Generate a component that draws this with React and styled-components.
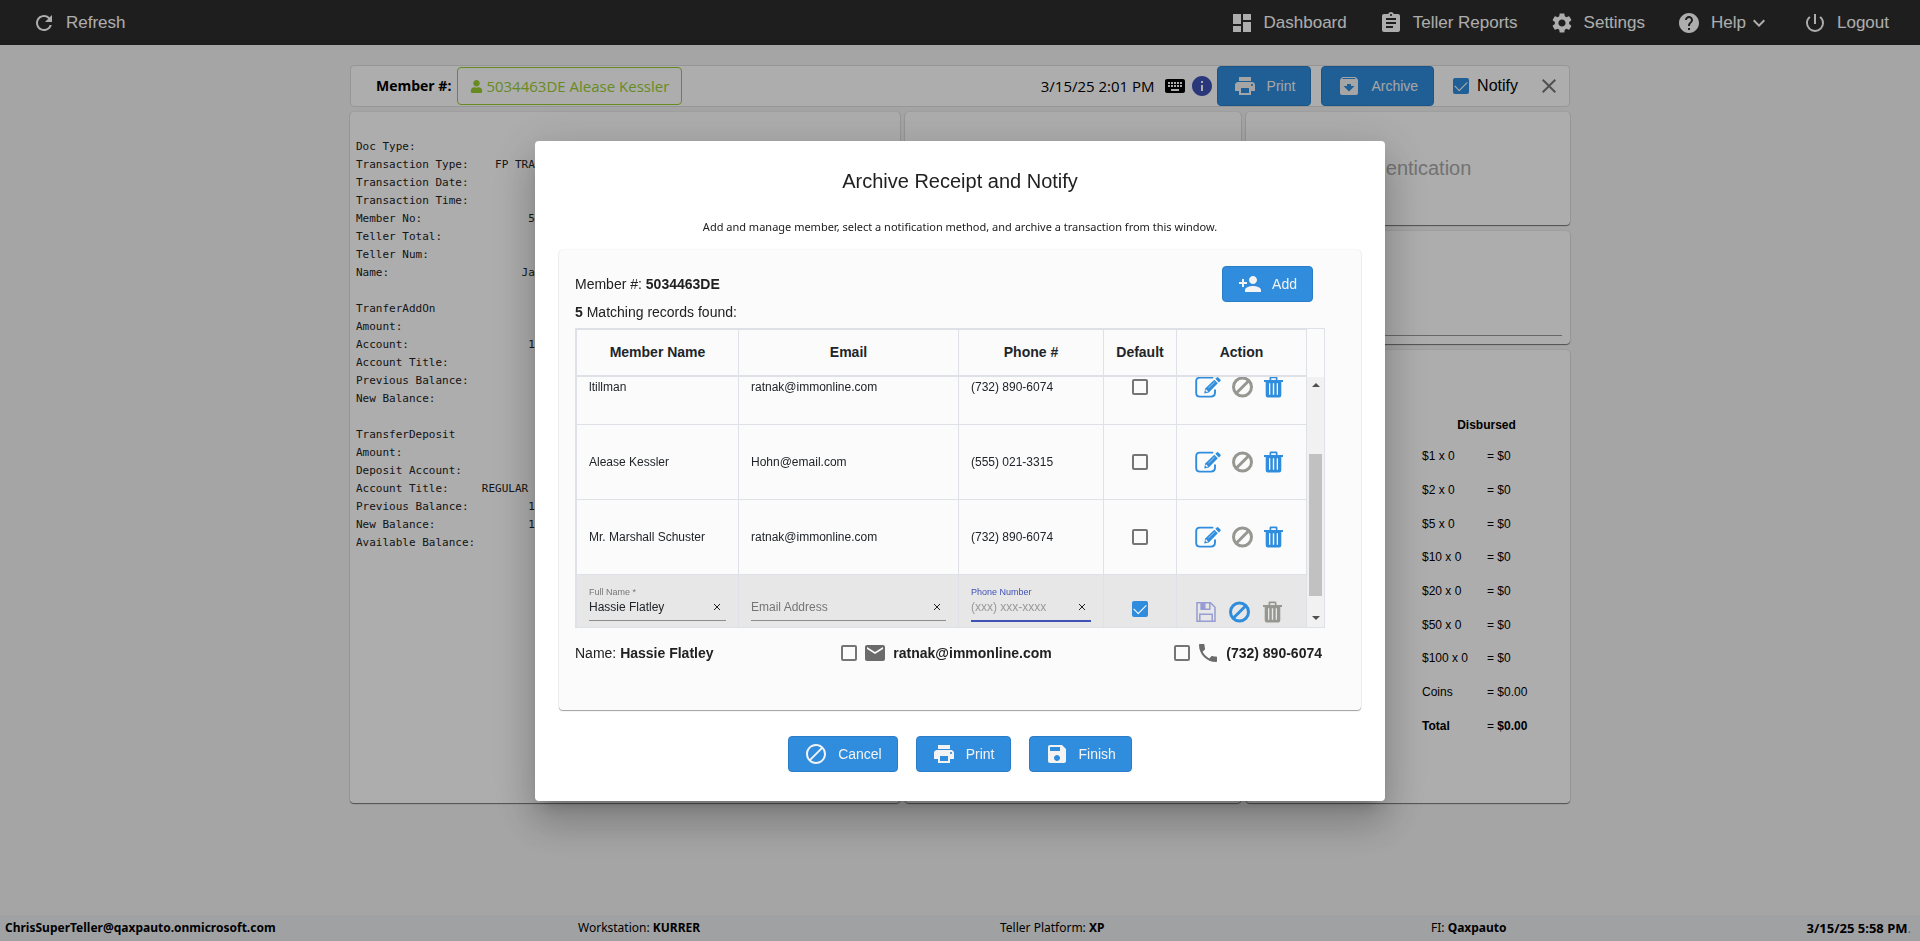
import React, { useLayoutEffect, useRef } from "react";
import styled, { createGlobalStyle, css } from "styled-components";
import {
  MdRefresh, MdDashboard, MdAssignment, MdSettings, MdHelp, MdExpandMore,
  MdPowerSettingsNew, MdKeyboard, MdInfo, MdPrint, MdArchive, MdClose,
  MdPersonAdd, MdBlock, MdSave, MdEmail, MdPhone,
} from "react-icons/md";
import { FaUser } from "react-icons/fa";

const sans = `"Liberation Sans", Arial, sans-serif`;
const humanist = `"Open Sans", "Noto Sans", sans-serif`;
const humanistWide = `"Noto Sans", "Open Sans", sans-serif`;
const mono = `"DejaVu Sans Mono", monospace`;
const blue = "#308ddd";
const line = "#dee2e6";

const GlobalStyle = createGlobalStyle`
  * { box-sizing: border-box; }
  body { margin: 0; background: #f4f4f4; font-family: ${sans}; font-size: 14px; color: #000; }
  button, input { font-family: inherit; margin: 0; }
  svg { display: block; flex: none; }
`;

const Page = styled.div`
  min-height: 100vh;
  display: flex;
  flex-direction: column;
`;

const TopBar = styled.nav`
  display: flex;
  justify-content: space-between;
  align-items: center;
  height: 45px;
  padding: 0 31px 0 32px;
  background: #2d2d2d;
`;

const NavGroup = styled.div`
  display: flex;
  gap: 32px;
`;

const NavLink = styled.a`
  display: flex;
  align-items: center;
  gap: 10px;
  color: #fff;
  font-size: 17px;
  line-height: 24px;
  text-decoration: none;
`;

const NavLabel = styled.span`
  display: flex;
  align-items: center;
  gap: 1px;
`;

const Main = styled.main`
  flex: 1;
  width: 100%;
  max-width: 1220px;
  margin: 0 auto;
  padding-top: 20px;
`;

const MemberBar = styled.header`
  display: flex;
  align-items: center;
  justify-content: space-between;
  min-height: 42px;
  padding: 0 8px 0 25px;
  border: 1px solid #dedede;
  border-radius: 4px;
  background: #fff;
`;

const BarGroup = styled.div`
  display: flex;
  align-items: center;
  gap: ${(p) => p.$gap}px;
`;

const MemberCaption = styled.strong`
  font: 700 14px/36px ${humanist};
`;

const MemberBadge = styled.span`
  display: flex;
  align-items: center;
  gap: 3px;
  height: 38px;
  padding: 0 12px;
  border: 1px solid #9acd32;
  border-radius: 4px;
  color: #9acd32;
  font: 400 15px/36px ${humanist};
`;

const Stamp = styled.time`
  font: 400 15px/24px ${humanist};
  margin-right: 5px;
`;

const Button = styled.button`
  display: flex;
  align-items: center;
  gap: 10px;
  height: ${(p) => p.$height || 36}px;
  padding: 0 15px;
  border: 1px solid #2a7dc6;
  border-radius: 4px;
  background: ${blue};
  color: #f3f3f3;
  font-size: 14px;
`;

const IconButton = styled.button`
  display: flex;
  padding: 0;
  border: 0;
  background: none;
  color: ${(p) => p.$color || "#222"};
`;

const CheckLabel = styled.label`
  display: flex;
  align-items: center;
  gap: 8px;
  font-size: 16px;
`;

const CheckBox = styled.input.attrs({ type: "checkbox" })`
  appearance: none;
  display: inline-grid;
  flex: none;
  place-content: center;
  width: 16px;
  height: 16px;
  border: 2px solid #757575;
  border-radius: 2px;
  vertical-align: middle;
  &:checked { background: ${blue}; border-color: ${blue}; }
  &:checked::after {
    content: "";
    width: 11px;
    height: 6px;
    margin-bottom: 3px;
    border: solid #fff;
    border-width: 0 0 1px 1px;
    transform: rotate(-45deg);
  }
`;

const Panels = styled.div`
  display: grid;
  grid-template-columns: 550fr 336fr 324fr;
  gap: 5px;
  margin-top: 5px;
`;

const raised = css`
  border-radius: 4px;
  box-shadow: 0 1px 1px rgba(0, 0, 0, 0.5), 0 0 2px rgba(0, 0, 0, 0.16);
`;

const Card = styled.section`
  ${raised}
  background: #fff;
`;

const Stack = styled.div`
  display: grid;
  grid-template-rows: 113px 113px 453px;
  gap: 6px;
`;

const Receipt = styled.pre`
  margin: 0;
  padding: 26px 6px;
  color: #222;
  font: 400 11px/18px ${mono};
`;

const AuthCard = styled(Card)`
  display: flex;
  align-items: center;
  justify-content: center;
  color: #aaa;
  font-size: 20px;
`;

const SignCard = styled(Card)`
  display: flex;
  align-items: flex-end;
  padding: 8px;
`;

const SignLine = styled.hr`
  flex: 1;
  margin: 0;
  border: 0;
  border-top: 1px solid #999;
`;

const CashCard = styled(Card)`
  display: flex;
  justify-content: flex-end;
  align-items: flex-start;
  padding: 68px 19px 0 0;
`;

const CashTable = styled.table`
  width: 129px;
  border-collapse: collapse;
  font-size: 12px;
  th, td { padding: 0; text-align: left; font-weight: 400; }
  th:first-child { width: 65px; }
  b { font-weight: 400; }
  thead th { height: 21px; text-align: center; vertical-align: top; font-weight: 700; }
  tbody tr { height: 34px; }
  tbody tr:nth-child(3n) { height: 33px; }
  tbody tr:last-child { th, b { font-weight: 700; } }
`;

const Footer = styled.footer`
  display: grid;
  grid-template-columns: 573fr 422fr 431fr 300fr 180fr;
  align-items: center;
  height: 26px;
  padding: 0 9px 0 5px;
  background: #ebeef0;
  font: 400 12px/26px ${humanistWide};
`;

const FooterTime = styled.span`
  text-align: right;
  font-size: 13px;
  color: #888;
  b { color: #000; }
`;

const Backdrop = styled.div`
  position: fixed;
  inset: 0;
  display: flex;
  align-items: center;
  justify-content: center;
  background: rgba(0, 0, 0, 0.32);
`;

const Dialog = styled.div`
  width: 850px;
  max-width: 100%;
  padding: 28px 24px 29px;
  border-radius: 4px;
  background: #fff;
  color: #212121;
  box-shadow: 0 11px 15px -7px rgba(0, 0, 0, 0.2), 0 24px 38px 3px rgba(0, 0, 0, 0.14),
    0 9px 46px 8px rgba(0, 0, 0, 0.12);
`;

const Title = styled.h2`
  margin: 0;
  text-align: center;
  font-size: 20px;
  font-weight: 400;
  line-height: 24px;
`;

const Hint = styled.p`
  margin: 26px 0 15px;
  text-align: center;
  font: 400 11px/16px ${humanistWide};
`;

const DialogCard = styled.section`
  padding: 16px 36px 45px 16px;
  background: #fbfbfb;
  border-radius: 4px;
  box-shadow: 0 1px 1px rgba(0, 0, 0, 0.35), 0 0 2px rgba(0, 0, 0, 0.12);
`;

const CardHead = styled.div`
  display: flex;
  justify-content: space-between;
  align-items: center;
  padding-right: 12px;
`;

const Found = styled.p`
  margin: 2px 0 8px;
  line-height: 16px;
`;

const TableFrame = styled.div`
  display: flex;
  height: 300px;
  border: 1px solid ${line};
`;

const Scroller = styled.div`
  flex: 1;
  overflow-y: scroll;
  scrollbar-width: none;
`;

const MemberTable = styled.table`
  width: 100%;
  table-layout: fixed;
  border-collapse: separate;
  border-spacing: 0;
  color: #212529;
`;

const HeadCell = styled.th`
  position: sticky;
  top: 0;
  z-index: 1;
  width: ${(p) => p.$width}px;
  height: 48px;
  padding: 0;
  border: solid ${line};
  border-width: 1px 1px 2px 0;
  background: #fbfbfb;
  font-size: 14px;
  &:first-child { border-left-width: 1px; }
`;

const Cell = styled.td`
  padding: 0 12px;
  border: solid ${line};
  border-width: 0 1px 1px 0;
  font-size: 12px;
  text-align: ${(p) => (p.$center ? "center" : "left")};
  &:first-child { border-left-width: 1px; }
`;

const FieldCell = styled(Cell)`
  padding-top: 10px;
  vertical-align: top;
`;

const EditCheckCell = styled(Cell)`
  padding-bottom: 6px;
`;

const Row = styled.tr`
  height: 75px;
  background: ${(p) => (p.$editing ? "#e7e7e7" : "transparent")};
`;

const Actions = styled.div`
  display: flex;
  align-items: center;
  gap: ${(p) => (p.$wide ? 13 : 11)}px;
  padding-left: ${(p) => (p.$wide ? 7 : 6)}px;
`;

const Field = styled.label`
  display: grid;
  grid-template-columns: 1fr auto;
  padding-bottom: 5px;
  border-bottom: ${(p) => (p.$active ? "2px solid #3f51b5" : "1px solid #8c8c8c")};
  color: ${(p) => (p.$active ? "#3f51b5" : "#777")};
`;

const FieldLabel = styled.span`
  grid-column: 1 / -1;
  min-height: 14px;
  font-size: 9px;
  line-height: 14px;
`;

const FieldInput = styled.input`
  width: 100%;
  min-width: 0;
  height: 16px;
  padding: 0;
  border: 0;
  outline: 0;
  background: none;
  color: #212529;
  font-size: 12px;
  &::placeholder { color: ${(p) => (p.$pale ? "#999" : "#757575")}; opacity: 1; }
`;

const ClearButton = styled(IconButton)`
  align-items: center;
  padding-right: 5px;
`;

const ScrollBar = styled.div`
  display: flex;
  flex-direction: column;
  width: 17px;
  padding-top: 48px;
`;

const ScrollArrow = styled.div`
  display: flex;
  align-items: center;
  justify-content: center;
  height: 17px;
  background: #f1f1f1;
`;

const ScrollTrack = styled.div`
  flex: 1;
  padding: 60px 2px 0;
  background: #f1f1f1;
`;

const ScrollThumb = styled.div`
  height: 142px;
  background: #c1c1c1;
`;

const Summary = styled.div`
  display: grid;
  grid-template-columns: 4fr 5fr auto;
  align-items: center;
  min-height: 24px;
  margin-top: 13px;
`;

const Contact = styled.label`
  display: flex;
  align-items: center;
  gap: 6px;
  padding-right: 3px;
  font-weight: 700;
  svg { color: #6b6b6b; }
`;

const DialogActions = styled.div`
  display: flex;
  justify-content: center;
  gap: 18px;
  margin-top: 26px;
`;

const EditIcon = () => (
  <svg width="26" height="22" viewBox="0 0 26 22" fill="none">
    <path d="M17.5 1.6H5Q1.2 1.6 1.2 5v12Q1.2 20.6 5 20.6h11q4 0 4-4v-2.5" stroke={blue} strokeWidth="1.9" strokeLinecap="round" />
    <path d="M10.2 12.6 19.3 3.8 22.8 7.3 13.8 16.4l-4.6 1z" fill={blue} />
    <path d="M20.3 2.8 21.8 1.4q.8-.8 1.6 0l2 2q.7.8 0 1.6L23.9 6.400z" fill={blue} />
    <path d="m11 13.200 2.200 2.200-1.500.6-1.400-1.300z" fill="#fbfbfb" />
    <path d="m13.400 12 6.300-6" stroke="#b9dbf6" strokeWidth=".8" />
  </svg>
);

const BanIcon = () => (
  <svg width="21" height="22" viewBox="0 0 21 22" fill="none" stroke="currentColor" strokeWidth="3">
    <circle cx="10.500" cy="11" r="9" />
    <path d="M4.200 17.300 16.800 4.700" />
  </svg>
);

const TrashIcon = () => (
  <svg width="19" height="22" viewBox="0 0 19 22" fill="currentColor">
    <path d="M0 4h5.500V2Q5.500.6 7 .6h5Q13.500.6 13.500 2v2H19v2h-1.700v13.300q0 2.200-2.200 2.200H3.900q-2.200 0-2.200-2.200V6H0zm7.200 0h4.600V2.300H7.200zM5 7.300v11.500h1.300V7.300zm3.800 0v11.500h1.400V7.300zm3.900 0v11.500H14V7.300z" fillRule="evenodd" />
  </svg>
);

const DiskIcon = () => (
  <svg width="20" height="22" viewBox="0 0 20 22" fill="none" stroke="#969dd3" strokeWidth="1.500">
    <path d="M1 1.800h13.500L19 6.300v13.900H1z" />
    <path d="M5.200 2v6.200h8.600V2M3.800 20v-6.700h12.400V20" />
    <path d="M5.500 2h3.300v5.500H5.500z" fill="#969dd3" />
  </svg>
);

const CrossIcon = () => (
  <svg width="8" height="8" viewBox="0 0 8 8" stroke="currentColor" strokeWidth="1">
    <path d="m1 1 6 6m0-6L1 7" />
  </svg>
);

const receiptText = `Doc Type:
Transaction Type:    FP TRA
Transaction Date:
Transaction Time:
Member No:                5
Teller Total:
Teller Num:
Name:                    Ja

TranferAddOn
Amount:
Account:                  1
Account Title:
Previous Balance:
New Balance:

TransferDeposit
Amount:
Deposit Account:
Account Title:     REGULAR
Previous Balance:         1
New Balance:              1
Available Balance:`;

const cash = [
  ["$1 x 0", "$0"], ["$2 x 0", "$0"], ["$5 x 0", "$0"], ["$10 x 0", "$0"], ["$20 x 0", "$0"],
  ["$50 x 0", "$0"], ["$100 x 0", "$0"], ["Coins", "$0.00"], ["Total", "$0.00"],
];

const columns = [
  ["Member Name", 163], ["Email", 220], ["Phone #", 145], ["Default", 73], ["Action", 130],
];

const members = [
  ["ltillman", "ratnak@immonline.com", "(732) 890-6074"],
  ["Alease Kessler", "Hohn@email.com", "(555) 021-3315"],
  ["Mr. Marshall Schuster", "ratnak@immonline.com", "(732) 890-6074"],
];

function NavItem({ icon: Icon, label, menu }) {
  return (
    <NavLink href="#">
      <Icon size={24} />
      <NavLabel>{label}{menu && <MdExpandMore size={24} />}</NavLabel>
    </NavLink>
  );
}

function EditField({ label, active, ...input }) {
  return (
    <Field $active={active}>
      <FieldLabel>{label}</FieldLabel>
      <FieldInput $pale={active} aria-label={label || input.placeholder} {...input} />
      <ClearButton type="button" aria-label="Clear"><CrossIcon /></ClearButton>
    </Field>
  );
}

function Members() {
  const scroller = useRef(null);
  useLayoutEffect(() => {
    scroller.current.scrollTop = 27;
  }, []);
  return (
    <TableFrame>
      <Scroller ref={scroller}>
        <MemberTable>
          <thead>
            <tr>{columns.map(([name, width]) => <HeadCell key={name} $width={width}>{name}</HeadCell>)}</tr>
          </thead>
          <tbody>
            {members.map(([name, email, phone]) => (
              <Row key={name}>
                <Cell>{name}</Cell>
                <Cell>{email}</Cell>
                <Cell>{phone}</Cell>
                <Cell $center><CheckBox aria-label={`Default ${name}`} /></Cell>
                <Cell>
                  <Actions>
                    <IconButton aria-label="Edit"><EditIcon /></IconButton>
                    <IconButton aria-label="Cancel" $color="#979792"><BanIcon /></IconButton>
                    <IconButton aria-label="Delete" $color={blue}><TrashIcon /></IconButton>
                  </Actions>
                </Cell>
              </Row>
            ))}
            <Row $editing>
              <FieldCell><EditField label="Full Name *" defaultValue="Hassie Flatley" /></FieldCell>
              <FieldCell><EditField placeholder="Email Address" /></FieldCell>
              <FieldCell><EditField label="Phone Number" placeholder="(xxx) xxx-xxxx" active /></FieldCell>
              <EditCheckCell $center><CheckBox aria-label="Default" defaultChecked /></EditCheckCell>
              <Cell>
                <Actions $wide>
                  <IconButton aria-label="Save"><DiskIcon /></IconButton>
                  <IconButton aria-label="Cancel" $color={blue}><BanIcon /></IconButton>
                  <IconButton aria-label="Delete" $color="#979792"><TrashIcon /></IconButton>
                </Actions>
              </Cell>
            </Row>
          </tbody>
        </MemberTable>
      </Scroller>
      <ScrollBar aria-hidden="true">
        <ScrollArrow><svg width="8" height="4" viewBox="0 0 8 4"><path d="M0 4 4 0l4 4z" fill="#505050" /></svg></ScrollArrow>
        <ScrollTrack><ScrollThumb /></ScrollTrack>
        <ScrollArrow><svg width="8" height="4" viewBox="0 0 8 4"><path d="m0 0 4 4 4-4z" fill="#505050" /></svg></ScrollArrow>
      </ScrollBar>
    </TableFrame>
  );
}

export default function App() {
  return (
    <>
      <GlobalStyle />
      <Page>
        <TopBar>
          <NavItem icon={MdRefresh} label="Refresh" />
          <NavGroup>
            <NavItem icon={MdDashboard} label="Dashboard" />
            <NavItem icon={MdAssignment} label="Teller Reports" />
            <NavItem icon={MdSettings} label="Settings" />
            <NavItem icon={MdHelp} label="Help" menu />
            <NavItem icon={MdPowerSettingsNew} label="Logout" />
          </NavGroup>
        </TopBar>
        <Main>
          <MemberBar>
            <BarGroup $gap={6}>
              <MemberCaption>Member #:</MemberCaption>
              <MemberBadge><FaUser size={13} />5034463DE Alease Kessler</MemberBadge>
            </BarGroup>
            <BarGroup $gap={19}>
              <BarGroup $gap={10}>
                <BarGroup $gap={3}>
                  <Stamp>3/15/25 2:01 PM</Stamp>
                  <MdKeyboard size={24} />
                  <MdInfo size={24} color="#3f51b5" />
                  <Button $height={40}><MdPrint size={24} />Print</Button>
                </BarGroup>
                <Button $height={40}><MdArchive size={24} />Archive</Button>
              </BarGroup>
              <CheckLabel><CheckBox defaultChecked />Notify</CheckLabel>
              <IconButton aria-label="Close" $color="#777"><MdClose size={24} /></IconButton>
            </BarGroup>
          </MemberBar>
          <Panels>
            <Card><Receipt>{receiptText}</Receipt></Card>
            <Card />
            <Stack>
              <AuthCard>Authentication</AuthCard>
              <SignCard><SignLine /></SignCard>
              <CashCard>
                <CashTable>
                  <thead><tr><th colSpan={2}>Disbursed</th></tr></thead>
                  <tbody>
                    {cash.map(([label, amount]) => (
                      <tr key={label}><th scope="row">{label}</th><td>= <b>{amount}</b></td></tr>
                    ))}
                  </tbody>
                </CashTable>
              </CashCard>
            </Stack>
          </Panels>
        </Main>
        <Footer>
          <b>ChrisSuperTeller@qaxpauto.onmicrosoft.com</b>
          <span>Workstation: <b>KURRER</b></span>
          <span>Teller Platform: <b>XP</b></span>
          <span>FI: <b>Qaxpauto</b></span>
          <FooterTime><b>3/15/25 5:58 PM</b>.</FooterTime>
        </Footer>
      </Page>
      <Backdrop>
        <Dialog role="dialog" aria-labelledby="dialog-title">
          <Title id="dialog-title">Archive Receipt and Notify</Title>
          <Hint>Add and manage member, select a notification method, and archive a transaction from this window.</Hint>
          <DialogCard>
            <CardHead>
              <span>Member #: <b>5034463DE</b></span>
              <Button><MdPersonAdd size={24} />Add</Button>
            </CardHead>
            <Found><b>5</b> Matching records found:</Found>
            <Members />
            <Summary>
              <span>Name: <b>Hassie Flatley</b></span>
              <Contact><CheckBox /><MdEmail size={24} />ratnak@immonline.com</Contact>
              <Contact><CheckBox /><MdPhone size={24} />(732) 890-6074</Contact>
            </Summary>
          </DialogCard>
          <DialogActions>
            <Button><MdBlock size={24} />Cancel</Button>
            <Button><MdPrint size={24} />Print</Button>
            <Button><MdSave size={24} />Finish</Button>
          </DialogActions>
        </Dialog>
      </Backdrop>
    </>
  );
}
